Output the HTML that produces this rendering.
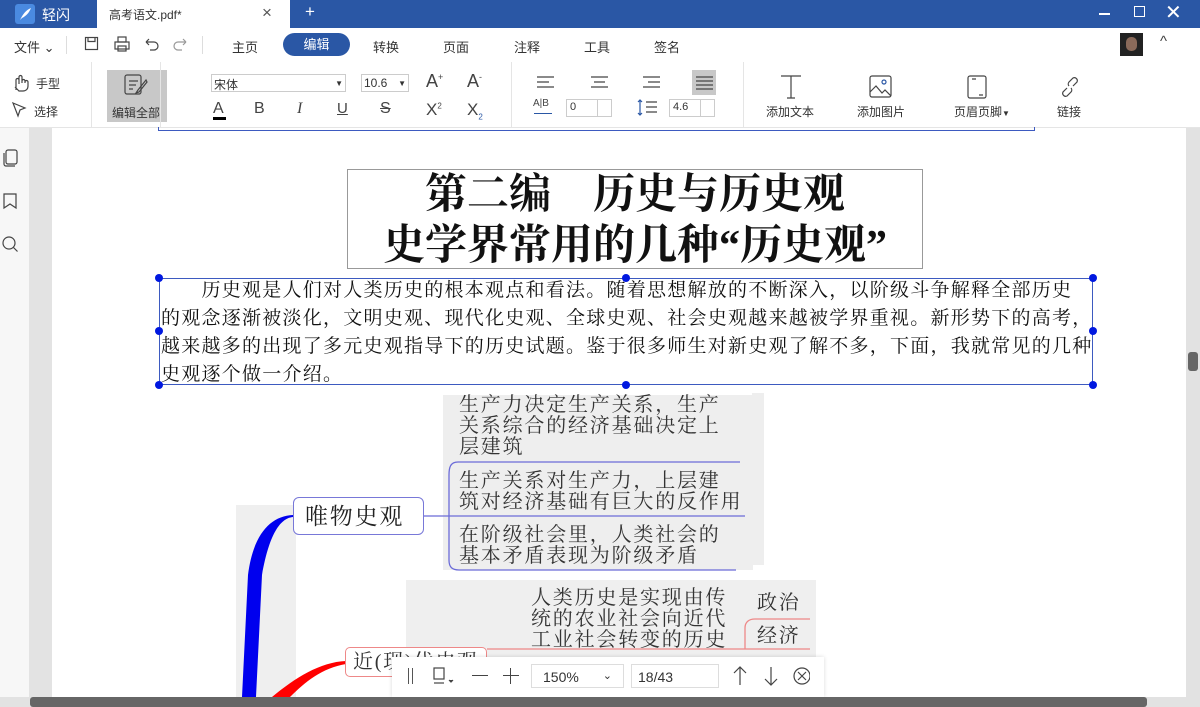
<!DOCTYPE html>
<html><head><meta charset="utf-8"><style>
*{margin:0;padding:0;box-sizing:border-box}
body{width:1200px;height:707px;overflow:hidden;position:relative;background:#fff;font-family:"Liberation Sans","Noto Sans CJK SC",sans-serif;font-size:12px;color:#333}
.a{position:absolute}
.serif{font-family:"Liberation Serif","Noto Serif CJK SC",serif;color:#111}
.ic{position:absolute;fill:none;stroke:#444;stroke-width:1.2}
.mm{font-family:"Liberation Serif","Noto Serif CJK SC",serif;color:#333;font-size:20px;line-height:21px;letter-spacing:1.8px;white-space:nowrap}
</style></head><body>
<!-- title bar -->
<div class="a" style="left:0;top:0;width:1200px;height:28px;background:#2a57a5"></div>
<div class="a" style="left:15px;top:4px;width:20px;height:20px;background:#4a8ae0;border-radius:3px"></div>
<svg class="a" style="left:15px;top:4px" width="20" height="20"><path d="M5 16 C8 10 11 6 16 4 C14 9 11 12 7 14" fill="#fff"/></svg>
<div class="a" style="left:42px;top:5px;color:#fff;font-size:14px">轻闪</div>
<div class="a" style="left:97px;top:0;width:193px;height:28px;background:#fff"></div>
<div class="a" style="left:109px;top:6px;font-size:12px;color:#333">高考语文.pdf*</div>
<div class="a" style="left:262px;top:3px;font-size:17px;color:#555">×</div>
<div class="a" style="left:305px;top:2px;font-size:17px;color:#fff">+</div>
<div class="a" style="left:1099px;top:13px;width:11px;height:1.5px;background:#fff"></div>
<div class="a" style="left:1134px;top:6px;width:11px;height:11px;border:1.5px solid #fff"></div>
<div class="a" style="left:1165px;top:0px;font-size:20px;color:#fff">✕</div>
<!-- menu row -->
<div class="a" style="left:14px;top:37px;font-size:13px">文件 ⌄</div>
<div class="a" style="left:66px;top:36px;width:1px;height:18px;background:#ddd"></div>
<svg class="ic" style="left:84px;top:36px" width="16" height="16"><rect x="1.5" y="1.5" width="12" height="12"/><path d="M4 1.5v4h7v-4"/></svg>
<svg class="ic" style="left:113px;top:35px" width="18" height="18"><rect x="2" y="7" width="14" height="7"/><rect x="5" y="2" width="8" height="5"/><rect x="5" y="11" width="8" height="5"/></svg>
<svg class="ic" style="left:143px;top:35px" width="18" height="18"><path d="M3 7h8a4 4 0 010 8H7M3 7l3-3M3 7l3 3"/></svg>
<svg class="ic" style="left:171px;top:35px;stroke:#999" width="18" height="18"><path d="M15 7H7a4 4 0 000 8h4M15 7l-3-3M15 7l-3 3"/></svg>
<div class="a" style="left:202px;top:36px;width:1px;height:18px;background:#ddd"></div>
<div class="a" style="left:232px;top:37px;font-size:13px">主页</div>
<div class="a" style="left:283px;top:33px;width:67px;height:23px;background:#2a57a5;border-radius:12px;color:#fff;font-size:13px;text-align:center;line-height:23px">编辑</div>
<div class="a" style="left:373px;top:37px;font-size:13px">转换</div>
<div class="a" style="left:443px;top:37px;font-size:13px">页面</div>
<div class="a" style="left:514px;top:37px;font-size:13px">注释</div>
<div class="a" style="left:584px;top:37px;font-size:13px">工具</div>
<div class="a" style="left:654px;top:37px;font-size:13px">签名</div>
<div class="a" style="left:1120px;top:33px;width:23px;height:23px;background:#222"></div>
<div class="a" style="left:1126px;top:37px;width:11px;height:14px;background:#8a6a5a;border-radius:5px"></div>
<div class="a" style="left:1160px;top:33px;font-size:15px;color:#444">^</div>
<!-- toolbar -->
<svg class="ic" style="left:10px;top:72px" width="20" height="20"><path d="M6 18V8a1.5 1.5 0 013 0v4M9 8V5a1.5 1.5 0 013 0v6M12 9a1.5 1.5 0 013 0v2M15 10a1.5 1.5 0 013 0v4c0 3-2 5-5 5H9l-4-4"/></svg>
<div class="a" style="left:36px;top:75px">手型</div>
<svg class="ic" style="left:11px;top:101px" width="18" height="18"><path d="M2 2l12 5-5 2-2 6z"/></svg>
<div class="a" style="left:34px;top:103px">选择</div>
<div class="a" style="left:91px;top:62px;width:1px;height:66px;background:#e5e5e5"></div>
<div class="a" style="left:107px;top:70px;width:60px;height:52px;background:#c8c8c8"></div>
<svg class="ic" style="left:122px;top:72px" width="28" height="26"><rect x="3" y="3" width="16" height="19" rx="2"/><path d="M7 9h9M7 13h7M7 17h4M24 8l-8 10-2 3 3-1 8-10z"/></svg>
<div class="a" style="left:112px;top:104px;color:#333">编辑全部</div>
<div class="a" style="left:160px;top:62px;width:1px;height:66px;background:#e5e5e5"></div>
<div class="a" style="left:211px;top:74px;width:135px;height:18px;border:1px solid #ccc;padding:1px 2px;font-size:12px">宋体<span style="float:right;font-size:8px;margin-top:3px">▼</span></div>
<div class="a" style="left:361px;top:74px;width:48px;height:18px;border:1px solid #ccc;padding:1px 2px;font-size:12px">10.6<span style="float:right;font-size:8px;margin-top:3px">▼</span></div>
<div class="a" style="left:426px;top:71px;font-size:18px;color:#444">A<sup style="font-size:9px">+</sup></div>
<div class="a" style="left:467px;top:71px;font-size:18px;color:#444">A<sup style="font-size:9px">-</sup></div>
<div class="a" style="left:213px;top:100px;font-size:16px;color:#444">A</div><div class="a" style="left:213px;top:117px;width:13px;height:3px;background:#000"></div>
<div class="a" style="left:254px;top:100px;font-size:16px;color:#444">B</div>
<div class="a" style="left:297px;top:100px;font-size:16px;color:#444;font-style:italic;font-family:'Liberation Serif'">I</div>
<div class="a" style="left:337px;top:100px;font-size:15px;color:#444;text-decoration:underline">U</div>
<div class="a" style="left:380px;top:100px;font-size:16px;color:#444;text-decoration:line-through">S</div>
<div class="a" style="left:426px;top:100px;font-size:17px;color:#444">X<sup style="font-size:8px">2</sup></div>
<div class="a" style="left:467px;top:100px;font-size:17px;color:#444">X<sub style="font-size:8px;color:#2a57a5">2</sub></div>
<div class="a" style="left:511px;top:62px;width:1px;height:66px;background:#e5e5e5"></div>
<svg class="ic" style="left:536px;top:75px" width="20" height="16"><path d="M1 2h17M1 7h12M1 12h17"/></svg>
<svg class="ic" style="left:590px;top:75px" width="20" height="16"><path d="M1 2h17M4 7h11M1 12h17"/></svg>
<svg class="ic" style="left:642px;top:75px" width="20" height="16"><path d="M1 2h17M6 7h12M1 12h17"/></svg>
<div class="a" style="left:692px;top:70px;width:24px;height:25px;background:#c8c8c8"></div>
<svg class="ic" style="left:695px;top:75px" width="20" height="16"><path d="M1 2h17M1 6h17M1 10h17M1 14h17"/></svg>
<div class="a" style="left:533px;top:98px;font-size:10px;color:#444">A|B</div>
<div class="a" style="left:534px;top:113px;width:18px;height:1px;background:#2a57a5"></div>
<div class="a" style="left:566px;top:99px;width:46px;height:18px;border:1px solid #ccc;font-size:11px;padding:1px 3px">0</div>
<div class="a" style="left:597px;top:99px;width:1px;height:18px;background:#ccc"></div>
<svg class="ic" style="left:636px;top:98px" width="24" height="20"><path d="M4 2v15M2 4l2-2 2 2M2 15l2 2 2-2" style="stroke:#2a57a5"/><path d="M10 4h11M10 9h11M10 14h11"/></svg>
<div class="a" style="left:669px;top:99px;width:46px;height:18px;border:1px solid #ccc;font-size:11px;padding:1px 3px">4.6</div>
<div class="a" style="left:700px;top:99px;width:1px;height:18px;background:#ccc"></div>
<div class="a" style="left:743px;top:62px;width:1px;height:66px;background:#e5e5e5"></div>
<svg class="ic" style="left:778px;top:74px" width="26" height="26"><path d="M3 2h20M13 2v22M9 24h8"/></svg>
<div class="a" style="left:766px;top:103px">添加文本</div>
<svg class="ic" style="left:869px;top:75px" width="24" height="24"><rect x="1" y="1" width="21" height="21" rx="2"/><circle cx="15" cy="7" r="2" style="stroke:#2a57a5"/><path d="M1 17l6-6 6 7 3-3 6 6"/></svg>
<div class="a" style="left:857px;top:103px">添加图片</div>
<svg class="ic" style="left:967px;top:75px" width="22" height="24"><rect x="1" y="1" width="18" height="22" rx="2"/><path d="M5 4h4M12 20h4"/></svg>
<div class="a" style="left:954px;top:103px">页眉页脚<span style="font-size:8px">▼</span></div>
<svg class="ic" style="left:1057px;top:74px" width="26" height="26"><path d="M10 14l-4 4a3 3 0 004 4l4-4a3 3 0 000-4M16 12l4-4a3 3 0 00-4-4l-4 4a3 3 0 000 4"/></svg>
<div class="a" style="left:1057px;top:103px">链接</div>
<div class="a" style="left:0;top:127px;width:1200px;height:1px;background:#e5e5e5"></div>
<!-- left sidebar & grey gutter -->
<div class="a" style="left:0;top:128px;width:29px;height:579px;background:#f7f7f7"></div>
<div class="a" style="left:29px;top:128px;width:23px;height:579px;background:#e3e3e3"></div>
<svg class="ic" style="left:1px;top:148px" width="18" height="20"><rect x="5" y="2" width="11" height="14" rx="2"/><path d="M3 5v11a2 2 0 002 2h9"/></svg>
<svg class="ic" style="left:2px;top:192px" width="16" height="18"><path d="M2 2h12v14l-6-4-6 4z"/></svg>
<svg class="ic" style="left:1px;top:235px" width="18" height="18"><circle cx="8" cy="8" r="6"/><path d="M12.5 12.5l4 4"/></svg>
<!-- right scrollbar -->
<div class="a" style="left:1186px;top:128px;width:14px;height:579px;background:#e2e2e2"></div>
<div class="a" style="left:1188px;top:352px;width:10px;height:19px;background:#666;border-radius:3px"></div>
<!-- page content -->
<div class="a" style="left:158px;top:127px;width:877px;height:4px;border:1px solid #3d5ac0;border-top:none"></div>
<div class="a" style="left:347px;top:169px;width:576px;height:100px;border:1px solid #999"></div>
<div class="a serif" style="left:347px;top:170px;width:576px;text-align:center;font-size:42px;line-height:51px;font-weight:bold;white-space:nowrap">第二编　历史与历史观<br>史学界常用的几种“历史观”</div>
<div class="a" style="left:159px;top:278px;width:934px;height:107px;border:1px solid #3d5ac0"></div>
<div class="a" style="left:155px;top:274px;width:8px;height:8px;border-radius:4px;background:#0018e0"></div>
<div class="a" style="left:622px;top:274px;width:8px;height:8px;border-radius:4px;background:#0018e0"></div>
<div class="a" style="left:1089px;top:274px;width:8px;height:8px;border-radius:4px;background:#0018e0"></div>
<div class="a" style="left:155px;top:327px;width:8px;height:8px;border-radius:4px;background:#0018e0"></div>
<div class="a" style="left:1089px;top:327px;width:8px;height:8px;border-radius:4px;background:#0018e0"></div>
<div class="a" style="left:155px;top:381px;width:8px;height:8px;border-radius:4px;background:#0018e0"></div>
<div class="a" style="left:622px;top:381px;width:8px;height:8px;border-radius:4px;background:#0018e0"></div>
<div class="a" style="left:1089px;top:381px;width:8px;height:8px;border-radius:4px;background:#0018e0"></div>
<div class="a serif" style="left:161px;top:277px;width:930px;font-size:19px;line-height:28px;white-space:nowrap;letter-spacing:1.25px">　　历史观是人们对人类历史的根本观点和看法。随着思想解放的不断深入，以阶级斗争解释全部历史<br>的观念逐渐被淡化，文明史观、现代化史观、全球史观、社会史观越来越被学界重视。新形势下的高考，<br>越来越多的出现了多元史观指导下的历史试题。鉴于很多师生对新史观了解不多，下面，我就常见的几种<br>史观逐个做一介绍。</div>
<!-- mind map -->
<div class="a" style="left:443px;top:395px;width:310px;height:175px;background:#eeeeee"></div>
<div class="a" style="left:752px;top:393px;width:12px;height:172px;background:#eeeeee"></div>
<div class="a" style="left:236px;top:505px;width:60px;height:202px;background:#efefef"></div>
<div class="a" style="left:406px;top:580px;width:410px;height:120px;background:#efefef"></div>
<div class="a" style="left:296px;top:555px;width:110px;height:65px;background:#fff"></div>
<div class="a mm" style="left:459px;top:395px">生产力决定生产关系，生产<br>关系综合的经济基础决定上<br>层建筑</div>
<div class="a mm" style="left:459px;top:471px">生产关系对生产力，上层建<br>筑对经济基础有巨大的反作用</div>
<div class="a mm" style="left:459px;top:525px">在阶级社会里，人类社会的<br>基本矛盾表现为阶级矛盾</div>
<div class="a mm" style="left:531px;top:588px">人类历史是实现由传<br>统的农业社会向近代<br>工业社会转变的历史</div>
<div class="a mm" style="left:757px;top:593px">政治</div>
<div class="a mm" style="left:757px;top:626px">经济</div>
<svg class="a" style="left:0;top:0" width="1200" height="707" fill="none">
<path d="M458 462 H740 M458 462 C450 462 449 468 449 475 V560 C449 567 452 570 459 570 H736 M424 516 H745" stroke="#6b6bd8" stroke-width="1.3"/>
<path d="M293 517 C282 518 270 530 262 575 L256 697 H242 L248 575 C253 535 270 516 293 515 Z" fill="#0000ee"/>
<path d="M346 661 C320 662 295 678 272 697 H290 C305 682 322 668 346 664 Z" fill="#ff0000"/>
<path d="M487 649 H745 V628 C745 622 749 619 755 619 H810 M745 649 H810" stroke="#e88" stroke-width="1.3"/>
</svg>
<div class="a" style="left:293px;top:497px;width:131px;height:38px;border:1.5px solid #7878d8;border-radius:6px;background:#fff"></div>
<div class="a mm" style="left:305px;top:505px;font-size:23px;line-height:23px;color:#222">唯物史观</div>
<div class="a" style="left:345px;top:647px;width:142px;height:30px;border:1px solid #e88;border-radius:5px;background:#fff"></div>
<div class="a mm" style="left:353px;top:652px">近(现)代史观</div>
<!-- floating bar -->
<div class="a" style="left:392px;top:657px;width:432px;height:40px;background:#fff;box-shadow:0 0 4px rgba(0,0,0,.15)"></div>
<div class="a" style="left:408px;top:668px;width:1.2px;height:16px;background:#555;box-shadow:4px 0 0 #555"></div>
<svg class="ic" style="left:432px;top:667px" width="28" height="20"><rect x="2" y="1" width="10" height="11"/><path d="M2 16h10"/><path d="M17 13l2 2 2-2" fill="#444"/></svg>
<div class="a" style="left:472px;top:675px;width:16px;height:1.3px;background:#444"></div>
<div class="a" style="left:503px;top:675px;width:16px;height:1.3px;background:#444"></div><div class="a" style="left:510px;top:668px;width:1.3px;height:16px;background:#444"></div>
<div class="a" style="left:531px;top:664px;width:93px;height:24px;border:1px solid #ddd;font-size:14px;padding:4px 11px">150%<span style="float:right;font-size:11px">⌄</span></div>
<div class="a" style="left:631px;top:664px;width:88px;height:24px;border:1px solid #ddd;font-size:14px;padding:4px 6px">18/43</div>
<svg class="ic" style="left:730px;top:665px" width="80" height="22"><path d="M10 2v18M4 8l6-6 6 6M41 2v18M35 14l6 6 6-6"/><circle cx="72" cy="11" r="8"/><path d="M68 7l8 8M76 7l-8 8"/></svg>
<!-- bottom scrollbar -->
<div class="a" style="left:0;top:697px;width:1186px;height:10px;background:#e2e2e2"></div>
<div class="a" style="left:30px;top:697px;width:1117px;height:10px;background:#666;border-radius:3px"></div>
</body></html>
